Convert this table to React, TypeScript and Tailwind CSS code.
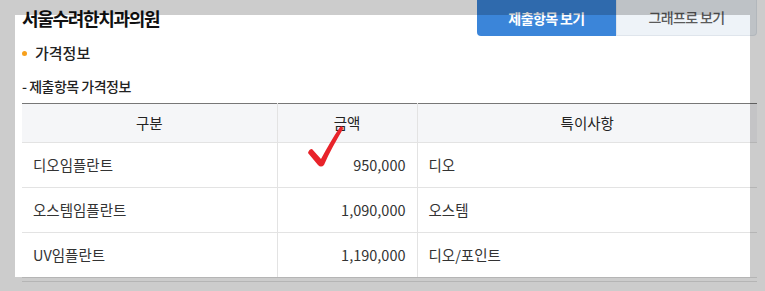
import React from "react";

const rows = [
  { name: "디오임플란트", price: "950,000", note: "디오" },
  { name: "오스템임플란트", price: "1,090,000", note: "오스템" },
  { name: "UV임플란트", price: "1,190,000", note: "디오/포인트" },
];

export default function App() {
  return (
    <div className="relative w-[765px] h-[291px] overflow-hidden bg-white text-[#222] font-['Noto_Sans_CJK_KR',sans-serif]">
      <div className="pl-[22px] pr-[8px]">
        <div className="flex items-center justify-between h-[35px]">
          <h1 className="text-[18px] font-bold tracking-[-1.3px] leading-none text-[#111]">
            서울수려한치과의원
          </h1>
          <div className="flex h-[36px] self-start">
            <button className="w-[139px] h-full rounded-bl-[4px] bg-[#3b85d9] text-white text-[14px] font-bold tracking-[-0.6px]">
              제출항목 보기
            </button>
            <button className="w-[141px] h-full rounded-br-[4px] bg-[#eef3f8] border border-t-0 border-[#dfe5ec] text-[#5a5a5a] text-[14px] font-medium tracking-[-0.6px]">
              그래프로 보기
            </button>
          </div>
        </div>

        <div className="mt-[8px] flex items-center gap-[8px] h-[20px]">
          <span className="w-[5px] h-[5px] rounded-full bg-[#f7a01c]" />
          <h2 className="text-[15px] font-medium">가격정보</h2>
        </div>

        <p className="mt-[13px] h-[20px] text-[14px] font-medium tracking-[-0.5px] leading-[20px]">
          - 제출항목 가격정보
        </p>

        <table className="mt-[7px] w-full table-fixed border-collapse border-t border-[#777] text-[14.5px] text-[#333]">
          <colgroup>
            <col className="w-[255px]" />
            <col className="w-[140px]" />
            <col />
          </colgroup>
          <thead>
            <tr className="h-[39px] bg-[#f5f6f8]">
              <th className="font-normal text-[#222] border-b border-r border-[#e3e3e3]">구분</th>
              <th className="font-normal text-[#222] border-b border-r border-[#e3e3e3]">금액</th>
              <th className="font-normal text-[#222] border-b border-[#e3e3e3]">특이사항</th>
            </tr>
          </thead>
          <tbody>
            {rows.map((r) => (
              <tr key={r.name} className="h-[45px]">
                <td className="px-[11px] border-b border-r border-[#e3e3e3]">{r.name}</td>
                <td className="px-[11px] text-right border-b border-r border-[#e3e3e3]">{r.price}</td>
                <td className="px-[11px] border-b border-[#e3e3e3]">{r.note}</td>
              </tr>
            ))}
          </tbody>
        </table>
        <div className="mt-[3px] border-t border-[#e3e3e3]" />
      </div>

      {/* spotlight overlay */}
      <div className="pointer-events-none absolute left-[15px] top-[15px] w-[735px] h-[262px] shadow-[0_0_0_9999px_rgba(0,0,0,0.2)]" />

      {/* red check mark */}
      <svg
        className="pointer-events-none absolute left-[300px] top-[120px]"
        width="50"
        height="55"
        viewBox="0 0 50 55"
      >
        <path
          d="M8 33 Q9 29 12 29 L21 39 C27 28 33 17 40 7 Q43 5 43 9 C36 21 29 33 24 45 Q21 48 18 45 Z"
          fill="#e8232a"
        />
      </svg>
    </div>
  );
}
